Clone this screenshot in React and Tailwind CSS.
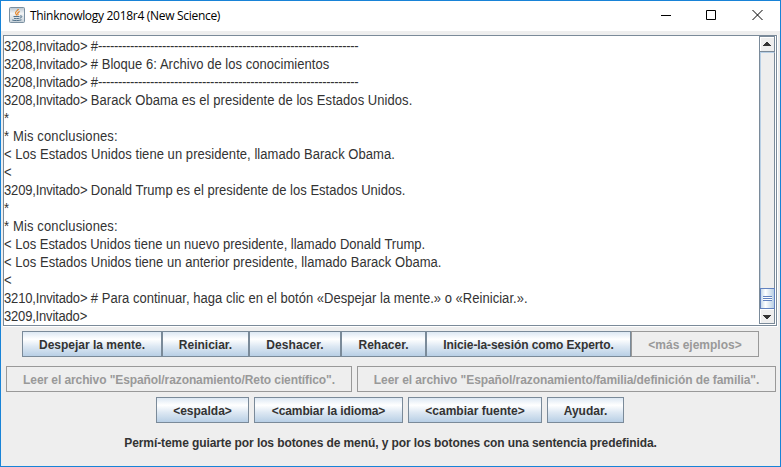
const RULE = "-".repeat(65);

// Each line is a list of [text, tracking] runs.
const LINES = [
  [["3208,Invitado> ", "tracking-[-0.18px]"], ["#", "tracking-normal"], [RULE, "tracking-[-0.35px]"]],
  [["3208,Invitado> ", "tracking-[-0.18px]"], ["# Bloque 6: Archivo de los conocimientos", "tracking-[0.04px]"]],
  [["3208,Invitado> ", "tracking-[-0.18px]"], ["#", "tracking-normal"], [RULE, "tracking-[-0.35px]"]],
  [["3208,Invitado> ", "tracking-[-0.18px]"], ["Barack Obama es el presidente de los Estados Unidos.", "tracking-[0.06px]"]],
  [["*", "tracking-normal"]],
  [["* Mis conclusiones:", "tracking-[0.14px]"]],
  [["< Los Estados Unidos tiene un presidente, llamado Barack Obama.", "tracking-[0.055px]"]],
  [["<", "tracking-normal"]],
  [["3209,Invitado> ", "tracking-[-0.18px]"], ["Donald Trump es el presidente de los Estados Unidos.", "tracking-[0.02px]"]],
  [["*", "tracking-normal"]],
  [["* Mis conclusiones:", "tracking-[0.14px]"]],
  [["< Los Estados Unidos tiene un nuevo presidente, llamado Donald Trump.", "tracking-[-0.01px]"]],
  [["< Los Estados Unidos tiene un anterior presidente, llamado Barack Obama.", "tracking-[0.03px]"]],
  [["<", "tracking-normal"]],
  [["3210,Invitado> ", "tracking-[-0.18px]"], ["# Para continuar, haga clic en el botón «Despejar la mente.» o «Reiniciar.».", "tracking-[0.035px]"]],
  [["3209,Invitado>", "tracking-[-0.2px]"]],
];

function Button({ size, disabled, children }) {
  const look = disabled
    ? "border-[#999999] text-[#999999]"
    : "border-[#7a8a99] text-[#333333] bg-[linear-gradient(to_bottom,#dde8f3_0%,#ffffff_30%,#dde8f3_60%,#b8cfe5_100%)]";
  return (
    <button disabled={disabled} className={`h-[26px] shrink-0 border pt-[2px] text-center leading-[22px] whitespace-nowrap ${size} ${look}`}>
      {children}
    </button>
  );
}

function JavaIcon() {
  return (
    <svg width="16" height="16" viewBox="0 0 16 16" fill="none">
      <defs>
        <linearGradient id="tile" x1="0" y1="0" x2="0" y2="1">
          <stop offset="0" stopColor="#b9c6d0" />
          <stop offset=".4" stopColor="#f2f4f5" />
          <stop offset="1" stopColor="#c5d0d8" />
        </linearGradient>
      </defs>
      <rect x=".5" y=".5" width="15" height="15" rx="1" fill="url(#tile)" stroke="#7b90a1" />
      <path d="M9.500 2C9 3.500 6 4.300 6.600 6.200C7 7 7.700 7.400 7.500 8.500M10.700 4.500C8.800 5.500 8.200 6.200 9 7.100C9.200 7.500 8.900 8 8.500 8.300" stroke="#e58325" strokeWidth="1.2" />
      <path d="M4.500 9.500H10.500M5 11.300C6 11.700 9 11.600 10.500 11.300M11 9C13.700 8.300 13.300 10.700 11 11M3.200 13C5 13.800 10 13.800 12.500 12.800" stroke="#52728b" />
    </svg>
  );
}

const ARROW_BUTTON = "flex shrink-0 items-center justify-center border-r border-b border-[#7a8a99] shadow-[inset_1px_1px_0_#ffffff]";

function Scrollbar() {
  return (
    <div className="mb-px flex w-4 shrink-0 flex-col border-l border-[#7a8a99] bg-[#eeeeee]">
      <div className={`h-4 border-t ${ARROW_BUTTON}`}>
        <svg width="8" height="4" shapeRendering="crispEdges" fill="#333333"><path d="M3 0h2v1h1v1h1v1h1v1H0V3h1V2h1V1h1z" /></svg>
      </div>
      <div className="grow border-t border-r border-l border-t-[#b8cfe5] border-l-[#b8cfe5] border-r-[#7a8a99]" />
      <div className="flex h-[21px] shrink-0 flex-col items-center justify-center border border-[#6382bf] bg-[linear-gradient(to_right,#c8daec,#ffffff_35%,#b8cfe5)]">
        <i className="h-px w-[9px] bg-[#6382bf]" />
        <i className="h-px w-[9px] bg-white" />
        <i className="h-px w-[9px] bg-[#6382bf]" />
        <i className="h-px w-[9px] bg-white" />
        <i className="h-px w-[9px] bg-[#6382bf]" />
      </div>
      <div className={`h-[15px] pt-px ${ARROW_BUTTON}`}>
        <svg width="8" height="4" shapeRendering="crispEdges" fill="#333333"><path d="M0 0h8v1H7v1H6v1H5v1H3V3H2V2H1V1H0z" /></svg>
      </div>
    </div>
  );
}

export default function App() {
  return (
    <div className="flex h-[467px] w-[781px] flex-col overflow-hidden border border-[#1883d7] bg-[#eeeeee] font-['Liberation_Sans',Arial,sans-serif] text-[#333333]">
      <header className="flex h-[30px] shrink-0 items-center bg-white pb-[2px] pl-2 text-black">
        <JavaIcon />
        <span className="mt-[2px] ml-[5px] font-['Open_Sans','Noto_Sans',sans-serif] text-[12px] tracking-[-0.3px] whitespace-nowrap">Thinknowlogy 2018r4 (New Science)</span>
        <div className="ml-auto flex items-center pr-[17px]">
          <svg width="10" height="10" stroke="currentColor"><path d="M0 5.500h10" /></svg>
          <svg className="ml-[35px]" width="10" height="10" fill="none" stroke="currentColor"><path d="M.5 .5h9v9h-9z" /></svg>
          <svg className="ml-9" width="11" height="10" stroke="currentColor"><path d="M.5 0l10 10M10.500 0l-10 10" /></svg>
        </div>
      </header>
      <main className="mt-1 mr-[2px] ml-[2px] flex h-[292px] shrink-0 border-r border-b border-white">
        <div className="flex min-w-0 grow border border-[#7a8a99] bg-white">
          <div className="min-w-0 grow origin-left scale-x-[0.9286] pt-px text-[14px] leading-[18px] whitespace-pre">
            {LINES.map((runs, i) => (
              <div key={i} className="h-[18px]">
                {runs.map(([text, tracking], j) => (
                  <span key={j} className={tracking}>{text}</span>
                ))}
              </div>
            ))}
          </div>
          <Scrollbar />
          <div className="w-px bg-white" />
        </div>
      </main>
      <section className="text-[12px] font-bold">
        <div className="mt-1 ml-[21px] flex">
          <Button size="w-[140px]">Despejar la mente.</Button>
          <Button size="w-[87px]">Reiniciar.</Button>
          <Button size="w-[92px] tracking-[0.1px]">Deshacer.</Button>
          <Button size="w-[85px]">Rehacer.</Button>
          <Button size="w-[205px] tracking-[-0.1px]">Inicie-la-sesión como Experto.</Button>
          <Button size="w-[128px]" disabled>&lt;más ejemplos&gt;</Button>
        </div>
        <div className="mt-[9px] ml-[5px] flex gap-[5px]">
          <Button size="w-[346px] tracking-[-0.09px]" disabled>Leer el archivo "Español/razonamiento/Reto científico".</Button>
          <Button size="w-[419px] tracking-[-0.08px]" disabled>Leer el archivo "Español/razonamiento/familia/definición de familia".</Button>
        </div>
        <div className="mt-[5px] ml-[155px] flex gap-[5px]">
          <Button size="w-[93px]">&lt;espalda&gt;</Button>
          <Button size="w-[149px] tracking-[-0.1px]">&lt;cambiar la idioma&gt;</Button>
          <Button size="w-[134px]">&lt;cambiar fuente&gt;</Button>
          <Button size="w-[77px]">Ayudar.</Button>
        </div>
        <p className="mt-3 text-center leading-4 tracking-[-0.09px]">Permí-teme guiarte por los botones de menú, y por los botones con una sentencia predefinida.</p>
      </section>
    </div>
  );
}
